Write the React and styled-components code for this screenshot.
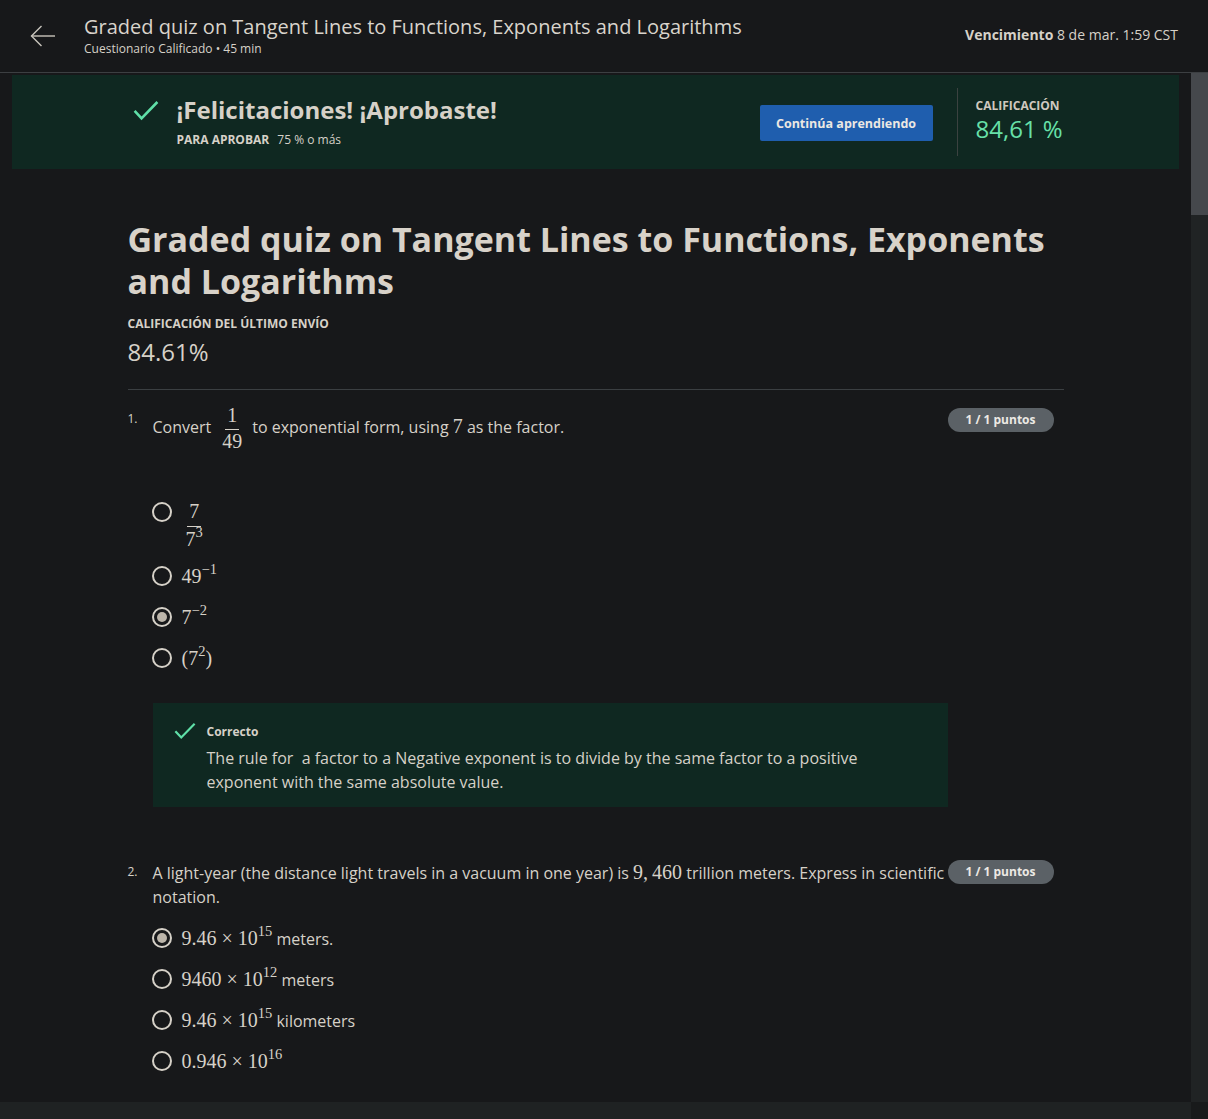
import React from 'react'
import styled, { createGlobalStyle } from 'styled-components'

const GlobalStyle = createGlobalStyle`
  html, body { margin: 0; padding: 0; height: 100%; }
  body {
    background: #17181a;
    color: #d6d1c8;
    font-family: "Open Sans", "Noto Sans", sans-serif;
    overflow: hidden;
  }
  * { box-sizing: border-box; }
`

const Page = styled.div`
  height: 100vh;
  display: flex;
  flex-direction: column;
`

const Header = styled.header`
  height: 73px;
  flex: none;
  display: flex;
  align-items: flex-start;
  border-bottom: 1px solid #3c3f42;
  padding: 14px 30px 0 30px;
`

const BackButton = styled.div`
  width: 26px;
  height: 44px;
  display: flex;
  align-items: center;
  margin-right: 28px;
  color: #c9c4bc;
`

const HeaderText = styled.div`
  flex: 1;
  display: flex;
  flex-direction: column;
`

const HeaderTitle = styled.div`
  font-size: 20px;
  line-height: 26px;
  color: #d9d4cc;
`

const HeaderSub = styled.div`
  font-size: 12px;
  line-height: 16px;
  margin-top: 1px;
`

const Due = styled.div`
  font-size: 14px;
  line-height: 18px;
  margin-top: 12px;
  b { font-weight: 700; }
`

const Middle = styled.div`
  flex: 1;
  display: flex;
  min-height: 0;
`

const Scroll = styled.main`
  flex: 1;
  overflow: hidden;
`

const VTrack = styled.div`
  width: 17px;
  flex: none;
  background: #202324;
  display: flex;
  flex-direction: column;
`

const Thumb = styled.div`
  height: 142px;
  background: #45484c;
`

const HBar = styled.div`
  height: 17px;
  flex: none;
  display: flex;
`

const HTrack = styled.div`
  flex: 1;
  background: #1f2223;
`

const Corner = styled.div`
  width: 17px;
  background: #181a1b;
`

const Banner = styled.section`
  background: #0f2821;
  margin: 2px 12px 0 12px;
  height: 94px;
`

const Container = styled.div`
  width: 936px;
  margin: 0 auto;
`

const BannerInner = styled(Container)`
  display: flex;
  align-items: center;
  height: 100%;
`

const BannerCheck = styled.div`
  width: 49px;
  flex: none;
  padding-left: 5px;
  align-self: flex-start;
  margin-top: 25px;
`

const BannerText = styled.div`
  flex: 1;
  margin-top: -1px;
`

const BannerTitle = styled.div`
  font-size: 24px;
  font-weight: 700;
  line-height: 30px;
`

const PassLine = styled.div`
  font-size: 12px;
  line-height: 16px;
  margin-top: 7px;
  b { font-weight: 700; margin-right: 5px; }
`

const Button = styled.button`
  background: #1f5eae;
  color: #ebe8e3;
  border: none;
  border-radius: 2px;
  font-family: inherit;
  font-weight: 700;
  font-size: 12.5px;
  width: 173px;
  height: 36px;
  margin: 2px 24px 0 1px;
`

const Divider = styled.div`
  width: 1px;
  height: 68px;
  background: #3b4240;
  margin-right: 18px;
`

const Score = styled.div`
  width: 88px;
  flex: none;
  white-space: nowrap;
  display: flex;
  flex-direction: column;
  margin-top: -3px;
`

const SmallCaps = styled.div`
  font-size: 12px;
  font-weight: 700;
  line-height: 16px;
  text-transform: uppercase;
  color: ${p => p.$muted ? '#cfc9bf' : '#d6d1c8'};
`

const ScoreValue = styled.div`
  font-size: 24px;
  line-height: 30px;
  color: #67e0a9;
`

const Title = styled.h1`
  font-size: 34px;
  font-weight: 700;
  line-height: 42px;
  margin: 49px 0 14px;
  color: #d8d2c9;
`

const Grade = styled.div`
  font-size: 24px;
  line-height: 30px;
  margin-top: 5px;
`

const Rule = styled.hr`
  border: none;
  border-top: 1px solid #3b3f42;
  margin: 22px 0 18px;
`

const Question = styled.div`
  display: grid;
  grid-template-columns: 25px 795px 1fr;
  margin-bottom: ${p => p.$after || 0}px;
`

const Num = styled.div`
  font-size: 12px;
  line-height: 16px;
  padding-top: ${p => p.$top || 4}px;
`

const Body = styled.div`
  display: flex;
  flex-direction: column;
`

const Prompt = styled.div`
  font-size: 16px;
  line-height: 24px;
  margin-top: ${p => p.$top || 0}px;
  margin-bottom: ${p => p.$gap}px;
`

const Badge = styled.div`
  justify-self: start;
  align-self: start;
  background: #5b6166;
  color: #ece9e4;
  border-radius: 12px;
  font-size: 12px;
  font-weight: 700;
  line-height: 24px;
  width: 106px;
  text-align: center;
`

const Options = styled.div`
  display: flex;
  flex-direction: column;
  gap: 16px;
`

const Option = styled.div`
  display: flex;
  align-items: flex-start;
  margin-left: -1px;
`

const Radio = styled.span`
  width: 20px;
  height: 20px;
  flex: none;
  border-radius: 50%;
  border: 2px solid #d6d1c8;
  margin: 2px 10px 0 0;
  display: flex;
  align-items: center;
  justify-content: center;
  &::after {
    content: '';
    width: 10px;
    height: 10px;
    border-radius: 50%;
    background: ${p => p.$checked ? '#bcb5aa' : 'transparent'};
  }
`

const Label = styled.span`
  font-size: 16px;
  line-height: 24px;
`

const Math = styled.span`
  font-family: "Liberation Serif", "DejaVu Serif", serif;
  font-size: 20px;
  sup {
    font-size: 14.5px;
    line-height: 0;
    vertical-align: 9px;
  }
`

const Frac = styled.span`
  display: inline-flex;
  flex-direction: column;
  align-items: center;
  vertical-align: middle;
  margin: ${p => p.$inline ? '0 10px 0 11px' : '0 0 -3px 4px'};
  line-height: ${p => p.$inline ? 21 : 23}px;
`

const Numer = styled.span`
  padding: 0 2px 3px;
  border-bottom: 1px solid #d6d1c8;
`

const Denom = styled.span`
  padding-top: 1px;
`

const Feedback = styled.div`
  background: #0f2821;
  margin-top: 32px;
  display: flex;
  padding: 18px 60px 14px 21px;
  height: 104px;
`

const FeedbackCheck = styled.div`
  width: 33px;
  flex: none;
  padding-top: 1px;
`

const FeedbackText = styled.div`
  font-size: 16px;
  line-height: 24px;
  p { margin: 0; }
`

const Correcto = styled.div`
  font-size: 12px;
  font-weight: 700;
  line-height: 16px;
  margin: 3px 0 6px;
`

const Check = ({ size = 26 }) => (
  <svg width={size} height={size * 0.8} viewBox="0 0 26 21" fill="none">
    <polyline points="1.5,11 8.5,18.5 24.5,2" stroke="#5fe0a8" strokeWidth="2.6" />
  </svg>
)

const Arrow = () => (
  <svg width="26" height="22" viewBox="0 0 26 22" fill="none" stroke="currentColor" strokeWidth="1.4">
    <line x1="1.5" y1="11" x2="25" y2="11" />
    <polyline points="11.5,1 1.5,11 11.5,21" />
  </svg>
)

const Fraction = ({ top, bottom, inline }) => (
  <Frac $inline={inline}>
    <Numer>{top}</Numer>
    <Denom>{bottom}</Denom>
  </Frac>
)

const q1 = [
  { label: <Fraction top="7" bottom={<>7<sup>3</sup></>} />, checked: false },
  { label: <>49<sup>−1</sup></>, checked: false },
  { label: <>7<sup>−2</sup></>, checked: true },
  { label: <>(7<sup>2</sup>)</>, checked: false },
]

const q2 = [
  { math: <>9.46 × 10<sup>15</sup></>, text: ' meters.', checked: true },
  { math: <>9460 × 10<sup>12</sup></>, text: ' meters', checked: false },
  { math: <>9.46 × 10<sup>15</sup></>, text: ' kilometers', checked: false },
  { math: <>0.946 × 10<sup>16</sup></>, text: '', checked: false },
]

export default function App() {
  return (
    <Page>
      <GlobalStyle />
      <Header>
        <BackButton><Arrow /></BackButton>
        <HeaderText>
          <HeaderTitle>Graded quiz on Tangent Lines to Functions, Exponents and Logarithms</HeaderTitle>
          <HeaderSub>Cuestionario Calificado • 45 min</HeaderSub>
        </HeaderText>
        <Due><b>Vencimiento</b> 8 de mar. 1:59 CST</Due>
      </Header>

      <Middle>
        <Scroll>
          <Banner>
            <BannerInner>
              <BannerCheck><Check /></BannerCheck>
              <BannerText>
                <BannerTitle>¡Felicitaciones! ¡Aprobaste!</BannerTitle>
                <PassLine><b>PARA APROBAR</b> 75 % o más</PassLine>
              </BannerText>
              <Button>Continúa aprendiendo</Button>
              <Divider />
              <Score>
                <SmallCaps $muted>Calificación</SmallCaps>
                <ScoreValue>84,61 %</ScoreValue>
              </Score>
            </BannerInner>
          </Banner>

          <Container>
            <Title>Graded quiz on Tangent Lines to Functions, Exponents and Logarithms</Title>
            <SmallCaps>Calificación del último envío</SmallCaps>
            <Grade>84.61%</Grade>
            <Rule />

            <Question $after={53}>
              <Num $top={3}>1.</Num>
              <Body>
                <Prompt $top={-3} $gap={48}>
                  Convert
                  <Math><Fraction inline top="1" bottom="49" /></Math>
                  to exponential form, using <Math>7</Math> as the factor.
                </Prompt>
                <Options>
                  {q1.map((o, i) => (
                    <Option key={i}>
                      <Radio $checked={o.checked} />
                      <Label><Math>{o.label}</Math></Label>
                    </Option>
                  ))}
                </Options>
                <Feedback>
                  <FeedbackCheck><Check size={22} /></FeedbackCheck>
                  <FeedbackText>
                    <Correcto>Correcto</Correcto>
                    <p>The rule for &nbsp;a factor to a Negative exponent is to divide by the same factor to a positive exponent with the same absolute value.</p>
                  </FeedbackText>
                </Feedback>
              </Body>
              <Badge>1 / 1 puntos</Badge>
            </Question>

            <Question>
              <Num $top={4}>2.</Num>
              <Body>
                <Prompt $gap={17}>
                  A light-year (the distance light travels in a vacuum in one year) is <Math>9,&#8201;460</Math> trillion meters. Express in scientific notation.
                </Prompt>
                <Options>
                  {q2.map((o, i) => (
                    <Option key={i}>
                      <Radio $checked={o.checked} />
                      <Label><Math>{o.math}</Math>{o.text}</Label>
                    </Option>
                  ))}
                </Options>
              </Body>
              <Badge>1 / 1 puntos</Badge>
            </Question>
          </Container>
        </Scroll>
        <VTrack><Thumb /></VTrack>
      </Middle>
      <HBar>
        <HTrack />
        <Corner />
      </HBar>
    </Page>
  )
}
